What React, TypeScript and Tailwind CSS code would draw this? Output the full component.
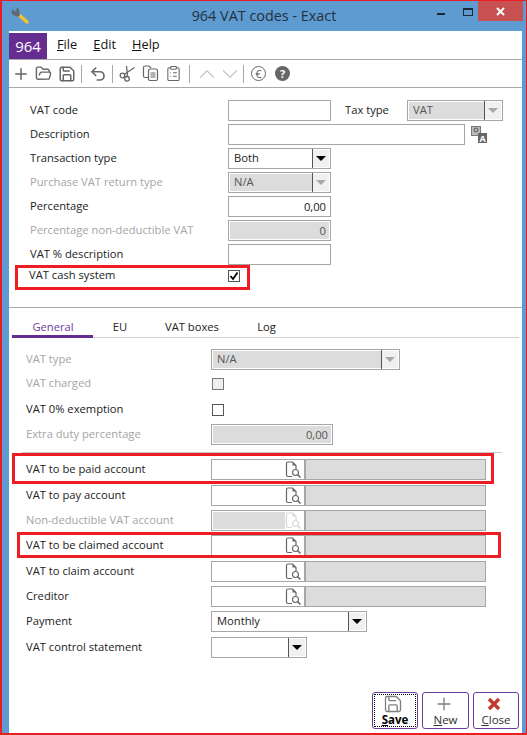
import { ChevronDown, ChevronUp, ClipboardList, FolderOpen, Plus, Save, Undo2 } from "lucide-react";
import type { ReactNode } from "react";

const font = "font-['Open_Sans',sans-serif]";

function Arrow({ off = false }: { off?: boolean }) {
  return (
    <div className="w-[16px] flex items-center justify-center self-stretch bg-[#f0f0f0]">
      <div className={`w-0 h-0 border-x-[5px] border-x-transparent border-t-[5px] ${off ? "border-t-[#a8a8a8]" : "border-t-black"}`} />
    </div>
  );
}

function Select({ value, width, off = false }: { value?: string; width: string; off?: boolean }) {
  return (
    <div className={`${width} h-[21px] flex items-stretch border border-[#a6a6a6] bg-white p-px`}>
      <div className={`flex-1 pl-[4px] leading-[16px] ${off ? "bg-[#dcdcdc] text-[#555]" : "text-[#222]"}`}>{value}</div>
      <div className="w-px bg-[#555] -my-px" />
      <Arrow off={off} />
    </div>
  );
}

function Input({ value, width, off = false }: { value?: string; width: string; off?: boolean }) {
  return (
    <div className={`${width} h-[21px] border border-[#a6a6a6] bg-white p-px`}>
      <div className={`h-full text-right pr-[3px] leading-[17px] ${off ? "bg-[#dcdcdc] text-[#555]" : "text-[#222]"}`}>{value}</div>
    </div>
  );
}

function Check({ checked = false, off = false }: { checked?: boolean; off?: boolean }) {
  return (
    <div className={`w-[12px] h-[12px] border flex items-center justify-center ${off ? "border-[#777] bg-[#efefef]" : "border-[#555] bg-white"}`}>
      {checked ? (
        <svg width="10" height="10" viewBox="0 0 10 10">
          <path d="M1.5 5 L4 8 L8.5 1.5" fill="none" stroke="#000" strokeWidth="1.8" />
        </svg>
      ) : null}
    </div>
  );
}

function DocSearch({ off = false }: { off?: boolean }) {
  const c = off ? "#d6d6d6" : "#666";
  return (
    <svg width="17" height="18" viewBox="0 0 17 18" className="shrink-0">
      <path d="M1.5 2.5 Q1.5 1 3 1 H7.5 L11 4.5 V8 M1.5 2.5 V14 Q1.5 15.5 3 15.5 H7" fill="none" stroke={c} strokeWidth="1.2" />
      <path d="M7.5 1 L11 4.5 H7.5 Z" fill={c} />
      <circle cx="10.5" cy="11.5" r="3" fill="none" stroke={c} strokeWidth="1.1" />
      <path d="M12.7 13.7 L15.5 16.5" stroke={c} strokeWidth="1.5" />
    </svg>
  );
}

function Account({ off = false }: { off?: boolean }) {
  return (
    <div className="flex h-[21px]">
      <div className="w-[94px] h-full border border-[#a6a6a6] bg-white p-px flex items-center">
        <div className={`h-full w-[72px] ${off ? "bg-[#dcdcdc]" : ""}`} />
        <DocSearch off={off} />
      </div>
      <div className="w-[181px] h-full border border-[#a6a6a6] bg-[#dcdcdc]" />
    </div>
  );
}

function Row({ label, off = false, className = "", children }: { label: string; off?: boolean; className?: string; children: ReactNode }) {
  return (
    <div className={`flex items-center h-[21px] pl-[17px] ${className}`}>
      <div className={`w-[185px] ${off ? "text-[#a5a5a5]" : "text-[#222]"}`}>{label}</div>
      {children}
    </div>
  );
}

function TopRow({ label, off = false, children }: { label: string; off?: boolean; children: ReactNode }) {
  return (
    <div className="flex items-center h-[21px] mb-[3px] pl-[21px]">
      <div className={`w-[198px] ${off ? "text-[#a5a5a5]" : "text-[#222]"}`}>{label}</div>
      {children}
    </div>
  );
}

function Sep() {
  return <div className="w-px h-[18px] bg-[#a8a8a8]" />;
}

function Tool({ children, className = "" }: { children: ReactNode; className?: string }) {
  return <div className={`w-[23px] h-[23px] flex items-center justify-center ${className}`}>{children}</div>;
}

function ActionButton({ icon, first, rest, width, focused = false }: { icon: ReactNode; first: string; rest: string; width: string; focused?: boolean }) {
  return (
    <button className={`${width} h-[37px] border border-[#6a3d9a] rounded-[3px] bg-white p-px`}>
      <div className={`h-full flex flex-col items-center ${focused ? "outline-1 outline-dotted outline-black -outline-offset-1" : ""}`}>
        <div className="h-[20px] mr-[4px] flex items-center justify-center">{icon}</div>
        <div className={`leading-[12px] text-[11.5px] ${focused ? "font-bold text-black" : "text-[#333]"}`}>
          <span className="underline">{first}</span>
          {rest}
        </div>
      </div>
    </button>
  );
}

export default function App() {
  return (
    <div className={`${font} w-[527px] h-[735px] flex flex-col bg-[#5e9bd1] border-l-2 border-r border-t border-b-2 border-[#ee1c25] text-[11.2px] overflow-hidden`}>
      <div className="h-[30px] shrink-0 grid grid-cols-[1fr_auto_1fr]">
        <div className="pl-[8px] pt-[6px]">
          <svg width="20" height="18" viewBox="0 0 20 18">
            <path d="M9 8 L17 15" stroke="#f4c22b" strokeWidth="3.5" strokeLinecap="round" />
            <path d="M2 2 L5 4.5 L7 2 L4.5 0.5 Q9 0 9.5 4 Q9.5 7 10 8 L8 10 Q6 8.5 4 8.5 Q0.5 7.5 2 2 Z" fill="#5f6b78" />
          </svg>
        </div>
        <div className="text-[14.4px] leading-[30px] text-[#25303c]">964 VAT codes - Exact</div>
        <div className="flex justify-end pr-[3px]">
          <div className="relative w-[90px] h-[20px]">
            <div className="absolute left-[4px] top-[12px] w-[8px] h-[2px] bg-[#1c2a38]" />
            <div className="absolute left-[30px] top-[7px] w-[10px] h-[8px] border border-t-2 border-[#1c2a38]" />
            <div className="absolute right-0 top-0 w-[45px] h-[20px] bg-[#c75050] flex items-center justify-center">
              <svg width="9" height="9" viewBox="0 0 9 9">
                <path d="M1 1 L8 8 M8 1 L1 8" stroke="#fff" strokeWidth="2" />
              </svg>
            </div>
          </div>
        </div>
      </div>

      <div className="flex-1 ml-[7px] mr-[4px] bg-white flex flex-col">
        <div className="h-[29px] shrink-0 border-b border-[#a8a8a8] flex items-stretch">
          <div className="w-[38px] mt-[2px] bg-[#662d91] text-white text-[15px] text-center leading-[26px]">964</div>
          <div className="flex items-center pl-[10px] gap-[16px] text-[12.8px] text-[#111]">
            <span><span className="underline">F</span>ile</span>
            <span><span className="underline">E</span>dit</span>
            <span><span className="underline">H</span>elp</span>
          </div>
        </div>

        <div className="h-[28px] shrink-0 border-b border-[#a8a8a8] flex items-center pl-0 text-[#666]">
          <Tool><Plus size={18} strokeWidth={2} /></Tool>
          <Tool><FolderOpen size={17} strokeWidth={2} /></Tool>
          <Tool><Save size={18} strokeWidth={2} /></Tool>
          <div className="w-[3px]" />
          <Sep />
          <Tool className="ml-[4px]"><Undo2 size={18} strokeWidth={2.2} /></Tool>
          <div className="w-[3px]" />
          <Sep />
          <Tool className="ml-[3px]">
            <svg width="17" height="17" viewBox="0 0 17 17" fill="none" stroke="#666" strokeWidth="1.3">
              <circle cx="3.5" cy="10.5" r="2.3" />
              <circle cx="8" cy="13.8" r="2.3" />
              <path d="M5.5 9.3 L15.5 2.5" />
              <path d="M8.5 11.5 L7.5 1" />
            </svg>
          </Tool>
          <Tool>
            <svg width="17" height="17" viewBox="0 0 17 17" fill="none" stroke="#666" strokeWidth="1.2">
              <path d="M7 12.5 H3 Q1.5 12.5 1.5 11 V2.5 Q1.5 1 3 1 H7 L9 3" />
              <rect x="6.5" y="4" width="9" height="11.5" rx="1.5" fill="#fff" />
              <path d="M8.5 8 H13.5 M8.5 10 H13.5 M8.5 12 H13.5" />
            </svg>
          </Tool>
          <Tool><ClipboardList size={17} strokeWidth={1.5} /></Tool>
          <div className="w-[4px]" />
          <Sep />
          <Tool className="ml-[5px] text-[#c8c8c8]"><ChevronUp size={26} strokeWidth={1.2} className="shrink-0" /></Tool>
          <Tool className="text-[#c8c8c8]"><ChevronDown size={26} strokeWidth={1.2} className="shrink-0" /></Tool>
          <div className="w-[2px]" />
          <Sep />
          <Tool className="ml-[3px]">
            <div className="w-[15px] h-[15px] rounded-full border-[1.5px] border-[#666] flex items-center justify-center text-[11px] leading-none text-[#555]">€</div>
          </Tool>
          <Tool className="ml-px">
            <div className="w-[15px] h-[15px] rounded-full bg-[#666] flex items-center justify-center text-[11px] font-bold leading-none text-white">?</div>
          </Tool>
        </div>

        <div className="pt-[12px] shrink-0">
          <TopRow label="VAT code">
            <Input width="w-[103px]" />
            <div className="w-[62px] ml-[14px] text-[#222]">Tax type</div>
            <Select value="VAT" width="w-[96px]" off />
          </TopRow>
          <TopRow label="Description">
            <Input width="w-[237px]" />
            <svg width="17" height="18" viewBox="0 0 17 18" className="ml-[6px]">
              <rect x="0.5" y="0.5" width="9" height="9" fill="#bbb" stroke="#777" />
              <circle cx="5" cy="4" r="2" fill="none" stroke="#555" />
              <rect x="7" y="7" width="9" height="10" fill="#666" />
              <text x="11.5" y="15.5" fontSize="9" fontWeight="bold" fill="#fff" textAnchor="middle">A</text>
            </svg>
          </TopRow>
          <TopRow label="Transaction type"><Select value="Both" width="w-[103px]" /></TopRow>
          <TopRow label="Purchase VAT return type" off><Select value="N/A" width="w-[103px]" off /></TopRow>
          <TopRow label="Percentage"><Input value="0,00" width="w-[103px]" /></TopRow>
          <TopRow label="Percentage non-deductible VAT" off><Input value="0" width="w-[103px]" off /></TopRow>
          <TopRow label="VAT % description"><Input width="w-[103px]" /></TopRow>
          <div className="flex items-center h-[21px] -mt-[3px] pl-[20px]">
            <div className="w-[199px] text-[#222]">VAT cash system</div>
            <Check checked />
          </div>
        </div>

        <div className="h-px mt-[21px] bg-[#a8a8a8] shrink-0" />

        <div className="flex h-[30px] mx-[3px] shrink-0 border-b border-[#d0d0d0] text-[#222]">
          <div className="w-[81px] h-[30px] pl-px text-center leading-[37px] text-[#6a3d9a] border-b-[3px] border-[#662d91]">General</div>
          <div className="w-[54px] text-center leading-[38px]">EU</div>
          <div className="w-[90px] text-center leading-[38px]">VAT boxes</div>
          <div className="w-[59px] text-center leading-[38px]">Log</div>
        </div>

        <div className="pt-[11px] flex-1 flex flex-col">
          <Row label="VAT type" off><Select value="N/A" width="w-[189px]" off /></Row>
          <Row label="VAT charged" off className="mt-[3px]"><div className="pl-px"><Check off /></div></Row>
          <Row label="VAT 0% exemption" className="mt-[5px]"><div className="pl-px"><Check /></div></Row>
          <Row label="Extra duty percentage" off className="mt-[4px]"><Input value="0,00" width="w-[122px]" off /></Row>
          <div className="h-px w-[480px] ml-[13px] mt-[7px] bg-[#c8c8c8]" />
          <Row label="VAT to be paid account" className="mt-[6px]"><Account /></Row>
          <Row label="VAT to pay account" className="mt-[5px]"><Account /></Row>
          <Row label="Non-deductible VAT account" off className="mt-[4px]"><Account off /></Row>
          <Row label="VAT to be claimed account" className="mt-[4px]"><Account /></Row>
          <Row label="VAT to claim account" className="mt-[5px]"><Account /></Row>
          <Row label="Creditor" className="mt-[4px]"><Account /></Row>
          <Row label="Payment" className="mt-[4px]"><Select value="Monthly" width="w-[156px]" /></Row>
          <Row label="VAT control statement" className="mt-[5px]"><Select width="w-[96px]" /></Row>

          <div className="flex justify-end gap-[4px] pr-[3px] mt-[34px]">
            <ActionButton focused width="w-[46px]" first="S" rest="ave" icon={<Save size={20} strokeWidth={1.6} className="text-[#808080]" />} />
            <ActionButton width="w-[47px]" first="N" rest="ew" icon={<Plus size={20} strokeWidth={1.6} className="text-[#808080]" />} />
            <ActionButton
              width="w-[46px]"
              first="C"
              rest="lose"
              icon={
                <svg width="14" height="14" viewBox="0 0 14 14">
                  <path d="M2 2 L12 12 M12 2 L2 12" stroke="#c0392b" strokeWidth="3.4" />
                </svg>
              }
            />
          </div>
        </div>
      </div>

      <div className="absolute left-[15px] top-[265px] w-[235px] h-[25px] border-[3px] border-[#ee1c25] pointer-events-none" />
      <div className="absolute left-[12px] top-[453px] w-[482px] h-[31px] border-[3px] border-[#ee1c25] pointer-events-none" />
      <div className="absolute left-[17px] top-[532px] w-[484px] h-[26px] border-[3px] border-[#ee1c25] pointer-events-none" />
    </div>
  );
}
